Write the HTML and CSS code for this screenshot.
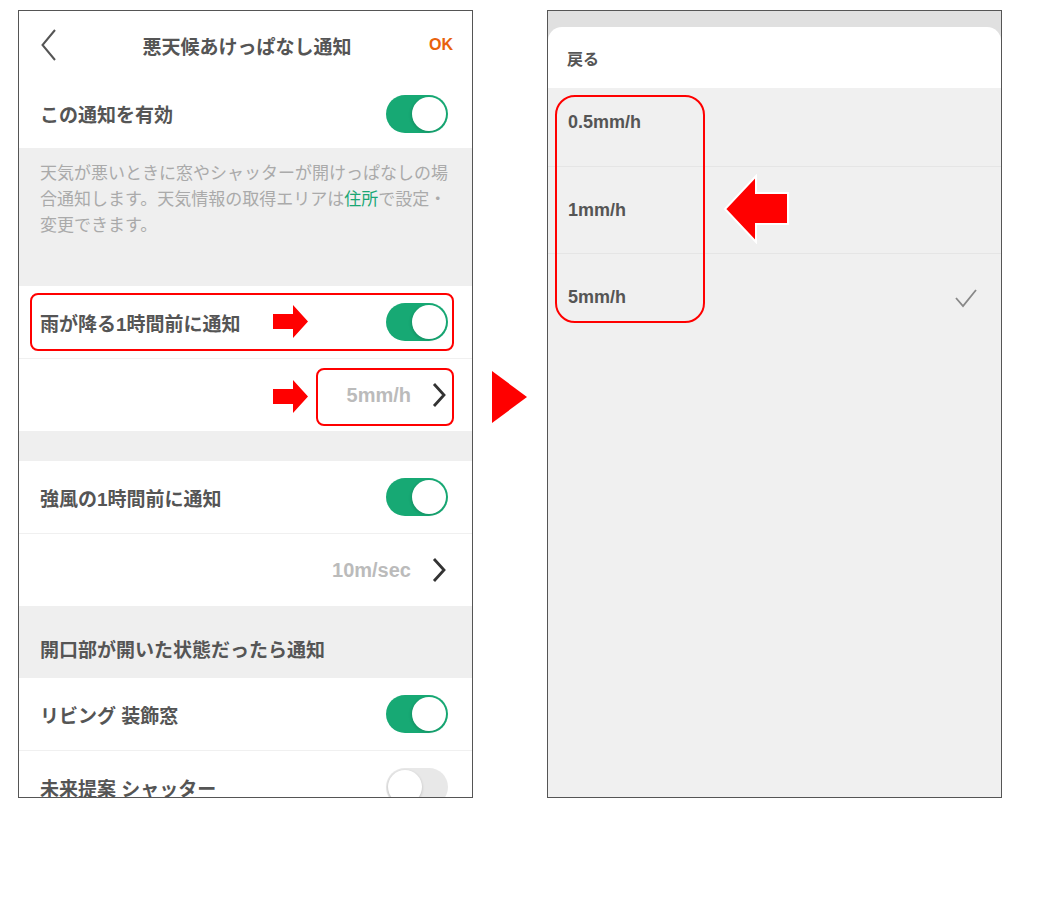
FILE: index.html
```html
<!DOCTYPE html>
<html lang="ja">
<head>
    <meta charset="UTF-8">
    <meta name="viewport" content="width=device-width, initial-scale=1.0">
    <title>悪天候あけっぱなし通知</title>
    <link rel="stylesheet" href="styles.css">
</head>
<body>
    <div class="page">
        <!-- left: settings screen -->
        <div class="phone settings">
            <div class="topbar">
                <svg class="back" width="16" height="34" viewBox="0 0 16 34">
                    <polyline points="14,2 1.5,17 14,32" fill="none" stroke="#555" stroke-width="2"/>
                </svg>
                <div class="title">悪天候あけっぱなし通知</div>
                <div class="ok">OK</div>
            </div>

            <div class="row first">
                <span class="label">この通知を有効</span>
                <span class="toggle on"></span>
            </div>

            <p class="desc">天気が悪いときに窓やシャッターが開けっぱなしの場合通知します。天気情報の取得エリアは<span class="link">住所</span>で設定・変更できます。</p>

            <div class="row line">
                <span class="label">雨が降る1時間前に通知</span>
                <span class="toggle on"></span>
            </div>
            <div class="row value-row">
                <span class="value">5mm/h</span>
                <svg class="chev" width="14" height="26" viewBox="0 0 14 26">
                    <polyline points="2,2 12,13 2,24" fill="none" stroke="#333" stroke-width="2.8"/>
                </svg>
            </div>

            <div class="spacer"></div>

            <div class="row line">
                <span class="label">強風の1時間前に通知</span>
                <span class="toggle on"></span>
            </div>
            <div class="row value-row">
                <span class="value">10m/sec</span>
                <svg class="chev" width="14" height="26" viewBox="0 0 14 26">
                    <polyline points="2,2 12,13 2,24" fill="none" stroke="#333" stroke-width="2.8"/>
                </svg>
            </div>

            <div class="section">開口部が開いた状態だったら通知</div>

            <div class="row line">
                <span class="label">リビング 装飾窓</span>
                <span class="toggle on"></span>
            </div>
            <div class="row">
                <span class="label">未来提案 シャッター</span>
                <span class="toggle"></span>
            </div>

            <!-- annotations -->
            <div class="mark mark-rain"></div>
            <div class="mark mark-value"></div>
            <svg class="arrow arrow-rain" width="35" height="33" viewBox="0 0 35 33">
                <polygon points="0,9 20,9 20,0 35,16.5 20,33 20,24 0,24" fill="#f00"/>
            </svg>
            <svg class="arrow arrow-value" width="35" height="33" viewBox="0 0 35 33">
                <polygon points="0,9 20,9 20,0 35,16.5 20,33 20,24 0,24" fill="#f00"/>
            </svg>
        </div>

        <div class="next"></div>

        <!-- right: picker sheet -->
        <div class="phone picker">
            <div class="strip"></div>
            <div class="sheet">
                <div class="sheet-head">戻る</div>
                <div class="options">
                    <div class="option first">0.5mm/h</div>
                    <div class="option">1mm/h</div>
                    <div class="option last">
                        <span>5mm/h</span>
                        <svg class="check" width="22" height="20" viewBox="0 0 22 20">
                            <polyline points="1,10 8,18 21,2" fill="none" stroke="#888" stroke-width="1.8"/>
                        </svg>
                    </div>
                </div>
            </div>

            <div class="mark mark-options"></div>
            <svg class="arrow arrow-left" width="67" height="70" viewBox="-2 -2 67 70">
                <polygon points="0,33 31,0 31,17 63,17 63,48 31,48 31,66" fill="#f00" stroke="#fff" stroke-width="2"/>
            </svg>
        </div>
    </div>
</body>
</html>
```

FILE: styles.css
```css
* {
    box-sizing: border-box;
}
body {
    margin: 0;
    background: #fff;
    font-family: "Liberation Sans", "Noto Sans CJK JP", sans-serif;
    color: #555;
}
.page {
    display: flex;
    align-items: flex-start;
    padding: 10px 0 0 18px;
}
.phone {
    position: relative;
    width: 455px;
    height: 788px;
    border: 1px solid #555;
    overflow: hidden;
}
.settings {
    background: #efefef;
}

/* header */
.topbar {
    height: 68px;
    background: #fff;
    display: grid;
    grid-template-columns: 1fr auto 1fr;
    align-items: center;
    padding: 0 19px 0 22px;
}
.back {
    display: block;
}
.title {
    font-size: 19px;
    font-weight: bold;
    color: #555;
}
.ok {
    justify-self: end;
    font-size: 16px;
    font-weight: bold;
    color: #e8620c;
}

/* rows */
.row {
    height: 72px;
    background: #fff;
    display: flex;
    align-items: center;
    justify-content: space-between;
    padding: 0 24px 0 21px;
}
.row.first {
    height: 69px;
}
.row.line {
    height: 73px;
    border-bottom: 1px solid #f0f0f0;
}
.label {
    font-size: 19px;
    font-weight: bold;
    color: #555;
}
.value-row {
    justify-content: flex-end;
    padding-right: 26px;
}
.value {
    font-size: 20px;
    font-weight: bold;
    color: #bbb;
}
.chev {
    display: block;
    margin-left: 21px;
}

.desc {
    margin: 0;
    padding: 13px 20px 47px 21px;
    font-size: 17px;
    line-height: 26px;
    color: #aaa;
}
.link {
    color: #1aa774;
}
.spacer {
    height: 30px;
}
.section {
    height: 72px;
    display: flex;
    align-items: flex-end;
    padding: 0 0 14px 21px;
    font-size: 19px;
    font-weight: bold;
    line-height: 26px;
    color: #555;
}

/* switch */
.toggle {
    position: relative;
    width: 62px;
    height: 38px;
    border-radius: 19px;
    background: #e8e8e8;
    flex-shrink: 0;
}
.toggle::after {
    content: "";
    position: absolute;
    top: 2px;
    left: 2px;
    width: 34px;
    height: 34px;
    border-radius: 50%;
    background: #fff;
    box-shadow: 0 1px 3px rgba(0, 0, 0, 0.2);
}
.toggle.on {
    background: #17a974;
}
.toggle.on::after {
    left: 26px;
    box-shadow: -1px 1px 3px rgba(0, 0, 0, 0.15);
}

/* arrow between screens */
.next {
    width: 0;
    height: 0;
    margin: 361px 20px 0 19px;
    border-left: 35px solid #f00;
    border-top: 26px solid transparent;
    border-bottom: 26px solid transparent;
}

/* picker */
.picker {
    display: flex;
    flex-direction: column;
    background: #e0e0e0;
}
.strip {
    height: 16px;
    flex-shrink: 0;
}
.sheet {
    flex: 1;
    display: flex;
    flex-direction: column;
    background: #fff;
    border-radius: 14px 14px 0 0;
    overflow: hidden;
}
.sheet-head {
    height: 61px;
    display: flex;
    align-items: center;
    padding-left: 19px;
    font-size: 16px;
    font-weight: bold;
    color: #555;
}
.options {
    flex: 1;
    background: #f0f0f0;
}
.option {
    height: 87px;
    display: flex;
    align-items: center;
    justify-content: space-between;
    padding: 0 24px 0 20px;
    border-bottom: 1px solid #e5e5e5;
    font-size: 18px;
    font-weight: bold;
    color: #555;
}
.option.first {
    height: 79px;
    padding-bottom: 9px;
}
.option.last {
    border-bottom: none;
}
.check {
    display: block;
}

/* red annotations */
.mark {
    position: absolute;
    border: 2px solid #f00;
    border-radius: 8px;
}
.mark-rain {
    left: 11px;
    top: 282px;
    width: 424px;
    height: 58px;
}
.mark-value {
    left: 297px;
    top: 357px;
    width: 138px;
    height: 58px;
}
.mark-options {
    left: 7px;
    top: 84px;
    width: 150px;
    height: 228px;
    border-radius: 20px;
}
.arrow {
    position: absolute;
    display: block;
}
.arrow-rain {
    left: 254px;
    top: 294px;
}
.arrow-value {
    left: 254px;
    top: 369px;
}
.arrow-left {
    left: 175px;
    top: 163px;
}
```
